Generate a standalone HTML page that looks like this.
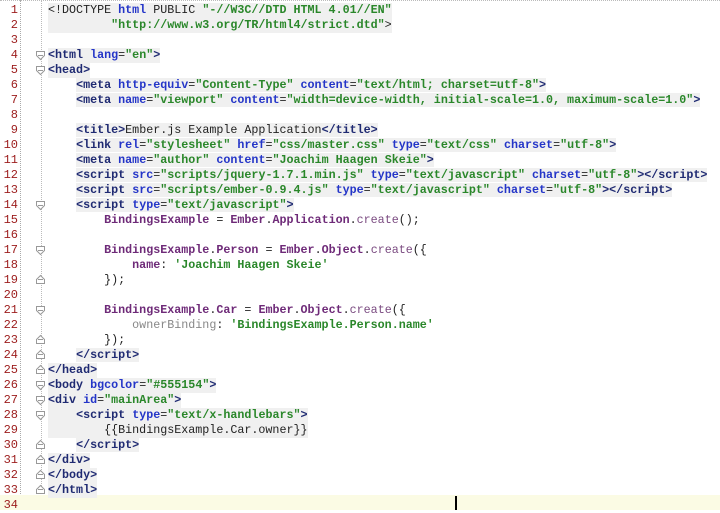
<!DOCTYPE html>
<html><head><style>
body{margin:0;width:720px;height:510px;background:#fff;overflow:hidden;position:relative;font-family:"Liberation Mono",monospace;}
.g{position:absolute;left:0;top:0;width:20px;height:510px;border-right:1px dotted #aaa;}
.fl{position:absolute;left:41px;top:0;height:510px;border-left:1px dotted #bbb;}
.l{position:absolute;left:0;height:15px;width:720px;font-size:11.7px;line-height:15px;white-space:pre;}
.n{position:absolute;left:0;width:18px;text-align:right;color:#9c1c1c;font-size:12px;}
.c{position:absolute;left:48px;}
.bg{background:#f0f0f0;}
.t{color:#1f2a72;font-weight:bold}
.a{color:#2435c8;font-weight:bold}
.v{color:#2a872a;font-weight:bold}
.j{color:#6e2a78;font-weight:bold}
.f{color:#7a4a80}
.o{color:#888;}
.p{color:#222}
</style></head><body>
<div style="position:absolute;left:0;top:0;width:720px;border-top:1px dotted #bbb"></div>
<div class="fl"></div>
<div class="g"></div>
<div style="position:absolute;left:0;top:495px;width:720px;height:15px;background:#fbfbe4"></div>
<div style="position:absolute;left:455px;top:496px;width:2px;height:14px;background:#000"></div>

<div class="l" style="top:3px"><span class="n">1</span><span class="c bg"><span class="p">&lt;!DOCTYPE </span><span class="a">html</span><span class="p"> PUBLIC </span><span class="v">"-//W3C//DTD HTML 4.01//EN"</span></span></div>
<div class="l" style="top:18px"><span class="n">2</span><span class="c bg">         <span class="v">"http://www.w3.org/TR/html4/strict.dtd"</span><span class="p">&gt;</span></span></div>
<div class="l" style="top:33px"><span class="n">3</span></div>
<div class="l" style="top:48px"><span class="n">4</span><span class="c bg"><span class="t">&lt;html</span> <span class="a">lang</span><span class="p">=</span><span class="v">"en"</span><span class="t">&gt;</span></span></div>
<div class="l" style="top:63px"><span class="n">5</span><span class="c bg"><span class="t">&lt;head&gt;</span></span></div>
<div class="l" style="top:78px"><span class="n">6</span><span class="c">    <span class="bg"><span class="t">&lt;meta</span> <span class="a">http-equiv</span><span class="p">=</span><span class="v">"Content-Type"</span> <span class="a">content</span><span class="p">=</span><span class="v">"text/html; charset=utf-8"</span><span class="t">&gt;</span></span></span></div>
<div class="l" style="top:93px"><span class="n">7</span><span class="c">    <span class="bg"><span class="t">&lt;meta</span> <span class="a">name</span><span class="p">=</span><span class="v">"viewport"</span> <span class="a">content</span><span class="p">=</span><span class="v">"width=device-width, initial-scale=1.0, maximum-scale=1.0"</span><span class="t">&gt;</span></span></span></div>
<div class="l" style="top:108px"><span class="n">8</span></div>
<div class="l" style="top:123px"><span class="n">9</span><span class="c">    <span class="bg"><span class="t">&lt;title&gt;</span><span class="p">Ember.js Example Application</span><span class="t">&lt;/title&gt;</span></span></span></div>
<div class="l" style="top:138px"><span class="n">10</span><span class="c">    <span class="bg"><span class="t">&lt;link</span> <span class="a">rel</span><span class="p">=</span><span class="v">"stylesheet"</span> <span class="a">href</span><span class="p">=</span><span class="v">"css/master.css"</span> <span class="a">type</span><span class="p">=</span><span class="v">"text/css"</span> <span class="a">charset</span><span class="p">=</span><span class="v">"utf-8"</span><span class="t">&gt;</span></span></span></div>
<div class="l" style="top:153px"><span class="n">11</span><span class="c">    <span class="bg"><span class="t">&lt;meta</span> <span class="a">name</span><span class="p">=</span><span class="v">"author"</span> <span class="a">content</span><span class="p">=</span><span class="v">"Joachim Haagen Skeie"</span><span class="t">&gt;</span></span></span></div>
<div class="l" style="top:168px"><span class="n">12</span><span class="c">    <span class="bg"><span class="t">&lt;script</span> <span class="a">src</span><span class="p">=</span><span class="v">"scripts/jquery-1.7.1.min.js"</span> <span class="a">type</span><span class="p">=</span><span class="v">"text/javascript"</span> <span class="a">charset</span><span class="p">=</span><span class="v">"utf-8"</span><span class="t">&gt;&lt;/script&gt;</span></span></span></div>
<div class="l" style="top:183px"><span class="n">13</span><span class="c">    <span class="bg"><span class="t">&lt;script</span> <span class="a">src</span><span class="p">=</span><span class="v">"scripts/ember-0.9.4.js"</span> <span class="a">type</span><span class="p">=</span><span class="v">"text/javascript"</span> <span class="a">charset</span><span class="p">=</span><span class="v">"utf-8"</span><span class="t">&gt;&lt;/script&gt;</span></span></span></div>
<div class="l" style="top:198px"><span class="n">14</span><span class="c">    <span class="bg"><span class="t">&lt;script</span> <span class="a">type</span><span class="p">=</span><span class="v">"text/javascript"</span><span class="t">&gt;</span></span></span></div>
<div class="l" style="top:213px"><span class="n">15</span><span class="c">        <span class="j">BindingsExample</span><span class="p"> = </span><span class="j">Ember</span><span class="p">.</span><span class="j">Application</span><span class="p">.</span><span class="f">create</span><span class="p">();</span></span></div>
<div class="l" style="top:228px"><span class="n">16</span></div>
<div class="l" style="top:243px"><span class="n">17</span><span class="c">        <span class="j">BindingsExample</span><span class="p">.</span><span class="j">Person</span><span class="p"> = </span><span class="j">Ember</span><span class="p">.</span><span class="j">Object</span><span class="p">.</span><span class="f">create</span><span class="p">({</span></span></div>
<div class="l" style="top:258px"><span class="n">18</span><span class="c">            <span class="j">name</span><span class="p">: </span><span class="v">'Joachim Haagen Skeie'</span></span></div>
<div class="l" style="top:273px"><span class="n">19</span><span class="c">        <span class="p">});</span></span></div>
<div class="l" style="top:288px"><span class="n">20</span></div>
<div class="l" style="top:303px"><span class="n">21</span><span class="c">        <span class="j">BindingsExample</span><span class="p">.</span><span class="j">Car</span><span class="p"> = </span><span class="j">Ember</span><span class="p">.</span><span class="j">Object</span><span class="p">.</span><span class="f">create</span><span class="p">({</span></span></div>
<div class="l" style="top:318px"><span class="n">22</span><span class="c">            <span class="o">ownerBinding</span><span class="p">: </span><span class="v">'BindingsExample.Person.name'</span></span></div>
<div class="l" style="top:333px"><span class="n">23</span><span class="c">        <span class="p">});</span></span></div>
<div class="l" style="top:348px"><span class="n">24</span><span class="c">    <span class="bg"><span class="t">&lt;/script&gt;</span></span></span></div>
<div class="l" style="top:363px"><span class="n">25</span><span class="c bg"><span class="t">&lt;/head&gt;</span></span></div>
<div class="l" style="top:378px"><span class="n">26</span><span class="c bg"><span class="t">&lt;body</span> <span class="a">bgcolor</span><span class="p">=</span><span class="v">"#555154"</span><span class="t">&gt;</span></span></div>
<div class="l" style="top:393px"><span class="n">27</span><span class="c bg"><span class="t">&lt;div</span> <span class="a">id</span><span class="p">=</span><span class="v">"mainArea"</span><span class="t">&gt;</span></span></div>
<div class="l" style="top:408px"><span class="n">28</span><span class="c bg">    <span class="t">&lt;script</span> <span class="a">type</span><span class="p">=</span><span class="v">"text/x-handlebars"</span><span class="t">&gt;</span></span></div>
<div class="l" style="top:423px"><span class="n">29</span><span class="c bg"><span class="p">        {{BindingsExample.Car.owner}}</span></span></div>
<div class="l" style="top:438px"><span class="n">30</span><span class="c">    <span class="bg"><span class="t">&lt;/script&gt;</span></span></span></div>
<div class="l" style="top:453px"><span class="n">31</span><span class="c bg"><span class="t">&lt;/div&gt;</span></span></div>
<div class="l" style="top:468px"><span class="n">32</span><span class="c bg"><span class="t">&lt;/body&gt;</span></span></div>
<div class="l" style="top:483px"><span class="n">33</span><span class="c bg"><span class="t">&lt;/html&gt;</span></span></div>
<div class="l" style="top:498px"><span class="n">34</span></div>

<svg width="720" height="510" style="position:absolute;left:0;top:0" fill="#fff" stroke="#999" stroke-width="1">
<path d="M36.5 51.5h8v4l-4 4l-4-4z"/><path d="M38 55.5h5"/>
<path d="M36.5 66.5h8v4l-4 4l-4-4z"/><path d="M38 70.5h5"/>
<path d="M36.5 201.5h8v4l-4 4l-4-4z"/><path d="M38 205.5h5"/>
<path d="M36.5 246.5h8v4l-4 4l-4-4z"/><path d="M38 250.5h5"/>
<path d="M36.5 306.5h8v4l-4 4l-4-4z"/><path d="M38 310.5h5"/>
<path d="M36.5 381.5h8v4l-4 4l-4-4z"/><path d="M38 385.5h5"/>
<path d="M36.5 396.5h8v4l-4 4l-4-4z"/><path d="M38 400.5h5"/>
<path d="M36.5 411.5h8v4l-4 4l-4-4z"/><path d="M38 415.5h5"/>
<path d="M36.5 283.5h8v-4l-4-4l-4 4z"/><path d="M38 279.5h5"/>
<path d="M36.5 343.5h8v-4l-4-4l-4 4z"/><path d="M38 339.5h5"/>
<path d="M36.5 358.5h8v-4l-4-4l-4 4z"/><path d="M38 354.5h5"/>
<path d="M36.5 373.5h8v-4l-4-4l-4 4z"/><path d="M38 369.5h5"/>
<path d="M36.5 448.5h8v-4l-4-4l-4 4z"/><path d="M38 444.5h5"/>
<path d="M36.5 463.5h8v-4l-4-4l-4 4z"/><path d="M38 459.5h5"/>
<path d="M36.5 478.5h8v-4l-4-4l-4 4z"/><path d="M38 474.5h5"/>
<path d="M36.5 493.5h8v-4l-4-4l-4 4z"/><path d="M38 489.5h5"/>
</svg>
</body></html>
